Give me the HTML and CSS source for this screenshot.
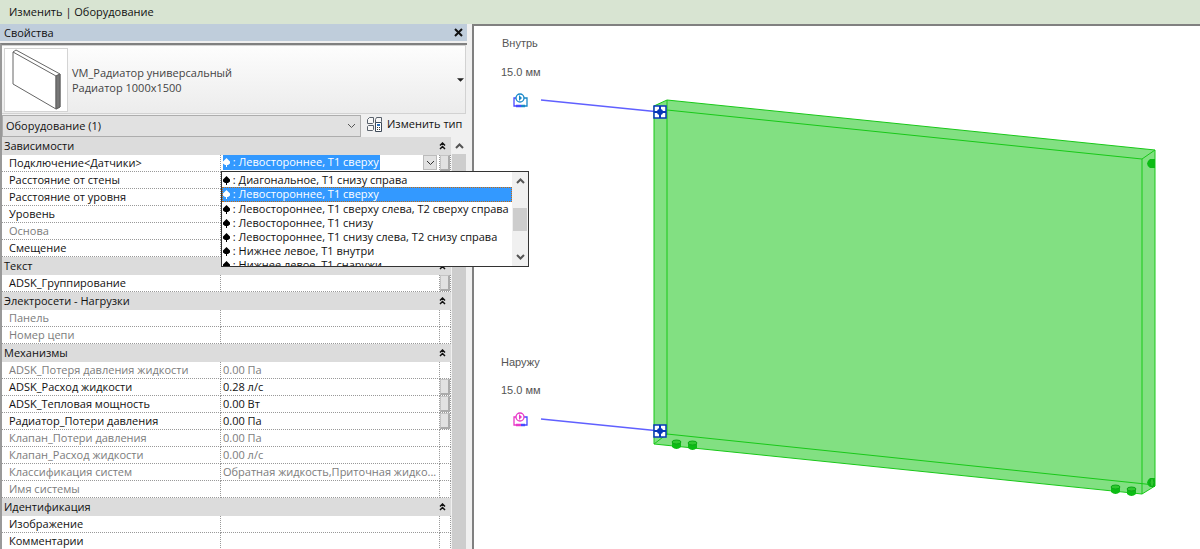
FILE: index.html
```html
<!DOCTYPE html>
<html lang="ru">
<head>
<meta charset="utf-8">
<title>Свойства</title>
<link rel="stylesheet" href="styles.css">
</head>
<body>
<svg class="defs" width="0" height="0" aria-hidden="true">
  <symbol id="spade" viewBox="0 0 7 9"><path d="M3.500 0L7 3.500v2L5 7H4v2H3V7H2L0 5.500v-2z"/></symbol>
  <symbol id="fold" viewBox="0 0 7 8"><path d="M1 3.500l2.500-2.500L6 3.500M1 7l2.500-2.500L6 7"/></symbol>
</svg>
<header class="ribbon">Изменить | Оборудование</header>
<div class="workspace">
  <aside class="panel">
    <div class="panel-title">
      <h1>Свойства</h1>
      <button class="close" aria-label="Закрыть"><svg width="9" height="9" viewBox="0 0 9 9"><path d="M1 1l7 7M8 1l-7 7"/></svg></button>
    </div>
    <div class="panel-body">
      <button class="type-selector">
        <svg class="preview" width="62" height="62" viewBox="0 0 62 62"><path class="side" d="M51 27l4-2v33l-4 2z"/><path d="M8 3l43 24v33L8 35zM8 3l3-2 44 24-4 2M55 25v33l-4 2"/></svg>
        <span class="type-name">VM_Радиатор универсальный<br>Радиатор 1000х1500</span>
        <svg class="caret" width="7" height="4" viewBox="0 0 8 4"><path d="M0 0h8L4 4z"/></svg>
      </button>
      <div class="filter">
        <select aria-label="Категория"><option>Оборудование (1)</option></select>
        <button class="edit-type">
          <svg width="16" height="16" viewBox="0 0 16 16"><path class="box" d="M.5 3.500l2-2h4v5l-1 1h-5zM8.500 3.500l1-2h5v4l-1 1h-5zM.5 10.500l1-1h5v4l-1 1h-5z"/><path class="sheet" d="M8.500 6.500h6v9h-6z"/><path class="mark" d="M10 8h3v2h-3z"/><path class="line" d="M10 11.500h1M12 11.500h1M10 13.500h1M12 13.500h1"/></svg>
          Изменить тип
        </button>
      </div>
      <div class="grid-area">
        <table class="props">
          <colgroup><col class="c-name"><col><col class="c-more"></colgroup>
          <tbody>
            <tr class="group"><th colspan="2">Зависимости</th><td><button class="fold" aria-label="Свернуть"><svg width="7" height="8"><use href="#fold"/></svg></button></td></tr>
            <tr><th>Подключение&lt;Датчики&gt;</th>
              <td class="combo-cell"><div class="combo">
                <span class="picked"><svg class="spade" width="7" height="9"><use href="#spade"/></svg> : Левостороннее, Т1 сверху</span>
                <button class="drop" aria-label="Открыть список"><svg width="9" height="6" viewBox="0 0 9 6"><path d="M1 1l3.500 3.500L8 1"/></svg></button>
              </div>
              <div class="popup">
                <ul role="listbox" aria-label="Подключение">
                  <li role="option"><svg class="spade" width="7" height="9"><use href="#spade"/></svg> : Диагональное, Т1 снизу справа</li>
                  <li role="option" aria-selected="true" class="current"><svg class="spade" width="7" height="9"><use href="#spade"/></svg> : Левостороннее, Т1 сверху</li>
                  <li role="option"><svg class="spade" width="7" height="9"><use href="#spade"/></svg> : Левостороннее, Т1 сверху слева, Т2 сверху справа</li>
                  <li role="option"><svg class="spade" width="7" height="9"><use href="#spade"/></svg> : Левостороннее, Т1 снизу</li>
                  <li role="option"><svg class="spade" width="7" height="9"><use href="#spade"/></svg> : Левостороннее, Т1 снизу слева, Т2 снизу справа</li>
                  <li role="option"><svg class="spade" width="7" height="9"><use href="#spade"/></svg> : Нижнее левое, Т1 внутри</li>
                  <li role="option"><svg class="spade" width="7" height="9"><use href="#spade"/></svg> : Нижнее левое, Т1 снаружи</li>
                </ul>
                <div class="popup-scroll">
                  <svg width="9" height="6" viewBox="0 0 9 6"><path d="M1 5l3.500-3.500L8 5"/></svg>
                  <span class="popup-thumb"></span>
                  <svg width="9" height="6" viewBox="0 0 9 6"><path d="M1 1l3.500 3.500L8 1"/></svg>
                </div>
              </div></td>
              <td><button class="more" aria-label="Параметр"></button></td></tr>
            <tr><th>Расстояние от стены</th><td></td><td></td></tr>
            <tr><th>Расстояние от уровня</th><td></td><td></td></tr>
            <tr><th>Уровень</th><td></td><td></td></tr>
            <tr class="off"><th>Основа</th><td></td><td></td></tr>
            <tr><th>Смещение</th><td></td><td></td></tr>
            <tr class="group"><th colspan="2">Текст</th><td><button class="fold" aria-label="Свернуть"><svg width="7" height="8"><use href="#fold"/></svg></button></td></tr>
            <tr><th>ADSK_Группирование</th><td></td><td><button class="more" aria-label="Параметр"></button></td></tr>
            <tr class="group"><th colspan="2">Электросети - Нагрузки</th><td><button class="fold" aria-label="Свернуть"><svg width="7" height="8"><use href="#fold"/></svg></button></td></tr>
            <tr class="off"><th>Панель</th><td></td><td></td></tr>
            <tr class="off"><th>Номер цепи</th><td></td><td></td></tr>
            <tr class="group"><th colspan="2">Механизмы</th><td><button class="fold" aria-label="Свернуть"><svg width="7" height="8"><use href="#fold"/></svg></button></td></tr>
            <tr class="off"><th>ADSK_Потеря давления жидкости</th><td>0.00 Па</td><td></td></tr>
            <tr><th>ADSK_Расход жидкости</th><td>0.28 л/с</td><td><button class="more" aria-label="Параметр"></button></td></tr>
            <tr><th>ADSK_Тепловая мощность</th><td>0.00 Вт</td><td><button class="more" aria-label="Параметр"></button></td></tr>
            <tr><th>Радиатор_Потери давления</th><td>0.00 Па</td><td><button class="more" aria-label="Параметр"></button></td></tr>
            <tr class="off"><th>Клапан_Потери давления</th><td>0.00 Па</td><td></td></tr>
            <tr class="off"><th>Клапан_Расход жидкости</th><td>0.00 л/с</td><td></td></tr>
            <tr class="off"><th>Классификация систем</th><td>Обратная жидкость,Приточная жидко...</td><td></td></tr>
            <tr class="off"><th>Имя системы</th><td></td><td></td></tr>
            <tr class="group"><th colspan="2">Идентификация</th><td><button class="fold" aria-label="Свернуть"><svg width="7" height="8"><use href="#fold"/></svg></button></td></tr>
            <tr><th>Изображение</th><td></td><td></td></tr>
            <tr><th>Комментарии</th><td></td><td></td></tr>
          </tbody>
        </table>
        <div class="scroll">
          <svg width="9" height="6" viewBox="0 0 9 6"><path d="M1 5l3.500-3.500L8 5"/></svg>
          <span class="thumb"></span>
        </div>
      </div>
    </div>
  </aside>
  <main class="view">
    <svg class="scene" viewBox="474 26 726 523" preserveAspectRatio="xMinYMin meet">
      <path class="body" d="M654 106l13-6 488 50v336l-13 8-488-50z"/>
      <path class="edge" d="M654 106l13-6 488 50v336l-13 8-488-50zM667 100v335M667 110l475 49v335M1142 159l13-9M654 444l13-10 488 51"/>
      <g class="port">
        <path d="M672 442v5q4.500 4 9 0v-5zM688 443v5q4.500 4 9 0v-5zM1111 487v5q4.500 4 9 0v-5zM1127 489v5q4.500 4 9 0v-5zM1150 159h5v9h-5q-6-4.500 0-9zM1150 478h5v9h-5q-6-4.500 0-9z"/>
        <g class="cap"><ellipse cx="676.500" cy="442" rx="4.500" ry="2"/><ellipse cx="692.500" cy="443" rx="4.500" ry="2"/><ellipse cx="1115.500" cy="487" rx="4.500" ry="2"/><ellipse cx="1131.500" cy="489" rx="4.500" ry="2"/><ellipse cx="1152" cy="482.500" rx="2" ry="4"/></g>
      </g>
      <path class="leader" d="M541 100l119 12M541 419l119 12"/>
      <g class="grip"><path d="M654 106h12v12h-12zM654 425h12v12h-12z"/><path class="cross" d="M660 106v12M654 112h12M660 425v12M654 431h12"/><circle cx="660" cy="112" r="3"/><circle cx="660" cy="431" r="3"/></g>
      <g class="pump in"><path class="pipe-a" d="M516 98h-2v8h3"/><path class="pipe-b" d="M524 98h3v8h-3"/><path class="bar-a" d="M516 106h5"/><path class="bar-b" d="M521 106h4"/><circle cx="520" cy="98" r="4"/><path class="play" d="M519 95l3 3-3 3z"/></g>
      <g class="pump out"><path class="pipe-a" d="M516 417h-2v8h3"/><path class="pipe-b" d="M524 417h3v8h-3"/><path class="bar-a" d="M516 425h5"/><path class="bar-b" d="M521 425h4"/><circle cx="520" cy="417" r="4"/><path class="play" d="M519 414l3 3-3 3z"/></g>
      <text x="502" y="47">Внутрь</text><text x="501" y="76">15.0 мм</text>
      <text x="501" y="366">Наружу</text><text x="501" y="394">15.0 мм</text>
    </svg>
  </main>
</div>
</body>
</html>
```
FILE: styles.css
```css
* { box-sizing: border-box; }
body {
  margin: 0;
  height: 100vh;
  display: flex;
  flex-direction: column;
  overflow: hidden;
  background: #f0f0f0;
  color: #111;
  font: 11px/16px "Open Sans", "Noto Sans", sans-serif;
}
button, select { font: inherit; color: inherit; }
button { border: 0; padding: 0; background: none; }
svg { flex: none; fill: none; stroke: #333; }
.defs { display: block; }
.ribbon { height: 24px; padding: 4px 9px; background: #d8e4d2; }
.workspace { flex: 1; min-height: 0; display: flex; gap: 5px; }
.panel { flex: 0 0 467px; display: flex; flex-direction: column; min-height: 0; }
.panel-title {
  height: 17px;
  display: flex;
  align-items: center;
  justify-content: space-between;
  padding: 0 4px;
  background: #bfcddb;
}
.panel-title h1 { margin: 0; font-size: 11px; line-height: 16px; font-weight: 400; }
.close { display: flex; }
.close svg { stroke: #111; stroke-width: 2; }
.panel-body {
  flex: 1;
  min-height: 0;
  margin-top: 2px;
  border-top: 2px solid #808080;
  border-left: 2px solid #999;
  display: flex;
  flex-direction: column;
}
.type-selector {
  height: 69px;
  display: flex;
  align-items: center;
  gap: 5px;
  margin-right: 1px;
  padding: 0 1px 0 2px;
  text-align: left;
  line-height: 15px;
  color: #444;
  border: 1px solid #d2d2d2;
  border-left: 0;
  background: linear-gradient(#fdfdfd, #ececec);
}
.preview { background: #fff; outline: 1px solid #d4d4d4; stroke: #666; margin-left: 1px; }
.preview .side { fill: #777; }
.type-name { flex: 1; }
.caret { fill: #222; stroke: none; }
.filter { height: 23px; display: flex; gap: 6px; }
.filter select {
  width: 359px;
  height: 22px;
  margin-top: 1px;
  padding: 0 3px;
  border: 1px solid #adadad;
  border-radius: 0;
  appearance: none;
  background: #e1e1e1 url("data:image/svg+xml,%3Csvg xmlns='http://www.w3.org/2000/svg' width='9' height='6'%3E%3Cpath d='M1 1l3.500 3.500L8 1' fill='none' stroke='%23555'/%3E%3C/svg%3E") no-repeat right 4px center;
}
.edit-type { display: flex; align-items: center; gap: 4px; padding-bottom: 3px; }
.edit-type .box { stroke: #59616b; fill: #f7f7f7; }
.edit-type .sheet { stroke: #3f4a58; fill: #fff; }
.edit-type .mark { fill: #2d6fb8; stroke: none; }
.grid-area { flex: 1; min-height: 0; display: flex; align-items: stretch; }
.props {
  flex: 1;
  width: 100%;
  align-self: flex-start;
  table-layout: fixed;
  border-collapse: separate;
  border-spacing: 0;
  background: #fff;
}
.c-name { width: 219px; }
.c-more { width: 11px; }
.props th, .props td {
  height: 17px;
  padding: 0 2px;
  border-right: 1px dotted #999;
  border-bottom: 1px dotted #999;
  font-weight: 400;
  text-align: left;
  white-space: nowrap;
  line-height: 16px;
}
.props th { padding-left: 7px; }
.props tr td:last-child { padding: 0; }
.props .off { color: #7c7c7c; }
.props .group th, .props .group td { height: 18px; background: #dcdcdc; border: 0; }
.props .group th { padding-left: 2px; line-height: 18px; }
.props td button { display: block; }
.props .fold { margin-left: -1px; }
.fold svg { display: block; stroke: #111; stroke-width: 1.5; }
.props .more {
  width: 10px;
  height: 16px;
  background: #e1e1e1;
  border: 1px solid #c4c4c4;
  border-right: 2px solid #aaa;
  border-bottom: 2px solid #aaa;
}
.props .combo-cell { position: relative; }
.combo { height: 16px; display: flex; justify-content: space-between; align-items: flex-start; }
.picked { height: 15px; background: #3399ff; color: #fff; padding-right: 1px; line-height: 14px; }
.spade { fill: #000; stroke: none; vertical-align: -1px; }
.picked .spade, .current .spade { fill: #fff; }
.drop { width: 14px; height: 15px; border: 1px solid #bbb; background: #e1e1e1; line-height: 0; }
.drop svg { display: block; margin: 0 auto; }
.popup {
  position: absolute;
  top: 16px;
  left: 0;
  z-index: 2;
  width: 308px;
  height: 96px;
  display: flex;
  overflow: hidden;
  border: 1px solid #333;
  background: #fff;
}
.popup ul { flex: 1; margin: 0; padding: 1px 0; list-style: none; }
.popup li { height: 14px; padding-left: 1px; line-height: 14px; }
.popup .current { height: 15px; background: #3399ff; color: #fff; outline: 1px dotted #c66a10; outline-offset: -1px; }
.popup-scroll { width: 16px; padding: 6px 0; display: flex; flex-direction: column; align-items: center; justify-content: space-between; background: #f0f0f0; }
.popup-scroll svg, .scroll svg { stroke: #555; stroke-width: 2; }
.popup-thumb { width: 14px; height: 23px; background: #cdcdcd; }
.scroll { flex: 0 0 16px; padding-top: 6px; display: flex; flex-direction: column; align-items: center; gap: 5px; }
.thumb { flex: 1; width: 14px; background: #cdcdcd; }
.view { flex: 1; min-width: 0; background: #fff; border-top: 2px solid #808080; border-left: 2px solid #808080; }
.scene { display: block; width: 100%; }
.scene text { fill: #555; stroke: none; font: 11px "Liberation Sans", Arial, sans-serif; }
.body { fill: #82e082; stroke: none; }
.edge { stroke: #18c818; }
.port { fill: #0cbc14; stroke: none; }
.cap { fill: #30c830; stroke: #0aa814; }
.leader { stroke: #6060ff; stroke-width: 1.5; }
.grip { fill: #fff; stroke: #0838b8; stroke-width: 1.5; }
.grip circle { fill: #0838b8; stroke: none; }
.grip .cross { stroke-width: 2; }
.pump { stroke-width: 1.3; }
.pump .bar-a, .pump .bar-b { stroke-width: 2.5; }
.in { stroke: #1888c8; }
.in .pipe-a, .in .bar-a { stroke: #4848ff; }
.in .play { fill: #1888c8; stroke: none; }
.out { stroke: #e838c8; }
.out .pipe-b, .out .bar-b { stroke: #4848ff; }
.out .play { fill: #e838c8; stroke: none; }
```
